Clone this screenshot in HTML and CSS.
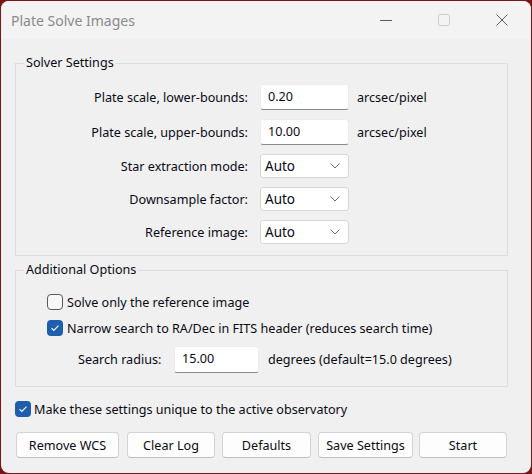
FILE: index.html
```html
<!DOCTYPE html>
<html lang="en">
<head>
  <meta charset="UTF-8" />
  <title>Plate Solve Images</title>
  <link rel="stylesheet" href="styles.css">
</head>
<body>
  <div class="window">
    <div class="titlebar">
      <span class="title">Plate Solve Images</span>
      <div class="caption">
        <span class="cap-btn">
          <svg width="12" height="12" viewBox="0 0 12 12"><path d="M0 6.5h12" stroke="#5c5c5c" stroke-width="1"/></svg>
        </span>
        <span class="cap-btn">
          <svg width="12" height="12" viewBox="0 0 12 12"><rect x="0.5" y="0.5" width="11" height="11" rx="1.5" fill="none" stroke="#cfcfcf" stroke-width="1"/></svg>
        </span>
        <span class="cap-btn">
          <svg width="12" height="12" viewBox="0 0 12 12"><path d="M0.5 0.5l11 11M11.5 0.5l-11 11" stroke="#5c5c5c" stroke-width="1"/></svg>
        </span>
      </div>
    </div>

    <div class="content">
      <fieldset class="group solver">
        <legend>Solver Settings</legend>
        <div class="form-grid">
          <label>Plate scale, lower-bounds:</label>
          <div class="textbox">0.20</div>
          <span class="unit">arcsec/pixel</span>

          <label>Plate scale, upper-bounds:</label>
          <div class="textbox">10.00</div>
          <span class="unit">arcsec/pixel</span>

          <label>Star extraction mode:</label>
          <div class="combo">Auto <svg width="10" height="6" viewBox="0 0 10 6"><path d="M0.5 0.5l4.5 4.5 4.5-4.5" fill="none" stroke="#6b6b6b" stroke-width="1"/></svg></div>
          <span></span>

          <label>Downsample factor:</label>
          <div class="combo">Auto <svg width="10" height="6" viewBox="0 0 10 6"><path d="M0.5 0.5l4.5 4.5 4.5-4.5" fill="none" stroke="#6b6b6b" stroke-width="1"/></svg></div>
          <span></span>

          <label>Reference image:</label>
          <div class="combo">Auto <svg width="10" height="6" viewBox="0 0 10 6"><path d="M0.5 0.5l4.5 4.5 4.5-4.5" fill="none" stroke="#6b6b6b" stroke-width="1"/></svg></div>
          <span></span>
        </div>
      </fieldset>

      <fieldset class="group options">
        <legend>Additional Options</legend>
        <div class="check-row">
          <span class="box"></span>
          <span>Solve only the reference image</span>
        </div>
        <div class="check-row">
          <span class="box checked"><svg width="16" height="16" viewBox="0 0 16 16"><path d="M4.5 8.2l2.3 2.3 4.7-4.8" fill="none" stroke="#fff" stroke-width="1.1"/></svg></span>
          <span>Narrow search to RA/Dec in FITS header (reduces search time)</span>
        </div>
        <div class="radius-row">
          <label>Search radius:</label>
          <div class="textbox small">15.00</div>
          <span>degrees (default=15.0 degrees)</span>
        </div>
      </fieldset>

      <div class="check-row unique">
        <span class="box checked"><svg width="16" height="16" viewBox="0 0 16 16"><path d="M4.5 8.2l2.3 2.3 4.7-4.8" fill="none" stroke="#fff" stroke-width="1.1"/></svg></span>
        <span>Make these settings unique to the active observatory</span>
      </div>

      <div class="buttons">
        <button class="b1">Remove WCS</button>
        <button class="b2">Clear Log</button>
        <button class="b3">Defaults</button>
        <button class="b4">Save Settings</button>
        <button class="b5">Start</button>
      </div>
    </div>
  </div>
</body>
</html>
```

FILE: styles.css
```css
body {
  margin: 0;
  background: #7a1616;
  font-family: 'Segoe UI', 'Noto Sans', sans-serif;
  font-size: 12.6px;
  color: #0a0a14;
  height: 474px;
  overflow: hidden;
}
.window {
  margin: 1px 1px 0 1px;
  height: 472px;
  background: #f0f0f0;
  border-radius: 8px;
  overflow: hidden;
}
.titlebar {
  height: 38px;
  display: flex;
  align-items: center;
  background: #f3f3f3;
}
.title {
  margin-left: 10px;
  font-size: 14px;
  color: #8a8a8a;
}
.caption {
  margin-left: auto;
  display: flex;
}
.cap-btn {
  width: 58px;
  height: 38px;
  display: flex;
  align-items: center;
  justify-content: center;
}
.content {
  padding: 16px 0 0 14px;
}
.group {
  width: 493px;
  box-sizing: border-box;
  margin: 0;
  border: 1px solid #dcdcdc;
  padding: 13px 0 11px 0;
}
.group legend {
  margin-left: 8px;
  padding: 0 2px;
  line-height: 16px;
}
.form-grid {
  display: grid;
  grid-template-columns: 232px 89px auto;
  column-gap: 12px;
  row-gap: 9px;
  align-items: center;
}
.form-grid label {
  text-align: right;
}
.form-grid .unit {
  margin-left: -4px;
}
.textbox {
  height: 26px;
  box-sizing: border-box;
  background: #fff;
  border: 1px solid #ececec;
  border-bottom: 1px solid #8a8a8a;
  border-radius: 3px;
  padding: 0 7px;
  line-height: 24px;
}
.combo {
  height: 24px;
  box-sizing: border-box;
  background: #fff;
  border: 1px solid #d6d6d6;
  border-radius: 3px;
  padding: 0 0 0 4px;
  display: flex;
  align-items: center;
  justify-content: space-between;
  font-size: 13.5px;
}
.combo svg {
  margin-right: 8px;
}
.options {
  margin-top: 6px;
  padding: 16px 0 13px 0;
}
.check-row {
  display: flex;
  align-items: center;
  gap: 4px;
  height: 16px;
  padding-left: 31px;
  margin-bottom: 10px;
}
.box {
  width: 16px;
  height: 16px;
  box-sizing: border-box;
  border: 1px solid #5a5a5a;
  border-radius: 4px;
  background: #f7f7f7;
  display: flex;
}
.box.checked {
  border: none;
  background: #1d5fae;
}
.radius-row {
  display: flex;
  align-items: center;
  padding-left: 62px;
}
.radius-row label {
  width: 96px;
  flex: none;
}
.textbox.small {
  width: 85px;
  height: 27px;
  margin-right: 9px;
}
.check-row.unique {
  padding-left: 0;
  margin: 14px 0 0 0;
  gap: 3px;
}
.buttons {
  display: flex;
  margin-top: 15px;
  padding-left: 1px;
}
.buttons button {
  height: 26px;
  box-sizing: border-box;
  background: #fdfdfd;
  border: 1px solid #d4d4d4;
  border-bottom-color: #bdbdbd;
  border-radius: 4px;
  font-family: inherit;
  font-size: 12.6px;
  color: #0a0a14;
  padding: 0;
}
.b1 { width: 103px; margin-right: 8px; }
.b2 { width: 88px; margin-right: 7px; }
.b3 { width: 89px; margin-right: 7px; }
.b4 { width: 95px; margin-right: 6px; }
.b5 { width: 88px; }
```
